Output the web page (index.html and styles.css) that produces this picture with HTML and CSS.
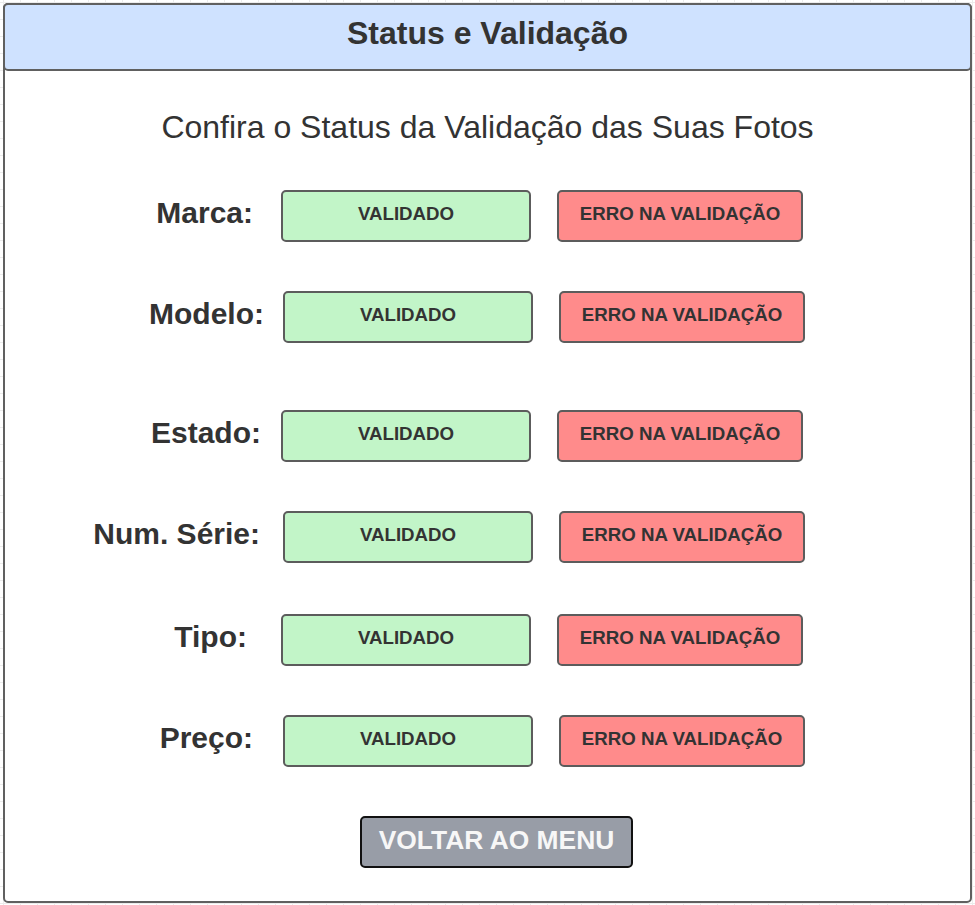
FILE: index.html
```html
<!DOCTYPE html>
<html lang="pt">
<head>
<meta charset="utf-8">
<title>Status e Validação</title>
<link rel="stylesheet" href="styles.css">
</head>
<body>
<div class="frame">
  <header class="header"><h1 class="title">Status e Validação</h1></header>
  <p class="subtitle">Confira o Status da Validação das Suas Fotos</p>
  <div class="rows">
    <div class="row r1"><div class="label l-marca">Marca:</div><div class="box ok">VALIDADO</div><div class="box err">ERRO NA VALIDAÇÃO</div></div>
    <div class="row r2 shift"><div class="label l-modelo">Modelo:</div><div class="box ok">VALIDADO</div><div class="box err">ERRO NA VALIDAÇÃO</div></div>
    <div class="row r3"><div class="label l-estado">Estado:</div><div class="box ok">VALIDADO</div><div class="box err">ERRO NA VALIDAÇÃO</div></div>
    <div class="row r4 shift"><div class="label l-serie">Num. Série:</div><div class="box ok">VALIDADO</div><div class="box err">ERRO NA VALIDAÇÃO</div></div>
    <div class="row r5"><div class="label l-tipo">Tipo:</div><div class="box ok">VALIDADO</div><div class="box err">ERRO NA VALIDAÇÃO</div></div>
    <div class="row r6 shift"><div class="label l-preco">Preço:</div><div class="box ok">VALIDADO</div><div class="box err">ERRO NA VALIDAÇÃO</div></div>
  </div>
  <div class="actions"><button class="back">VOLTAR AO MENU</button></div>
</div>
</body>
</html>
```

FILE: styles.css
```css
* { box-sizing: border-box; }
html, body { margin: 0; padding: 0; }
body {
  width: 975px;
  height: 905px;
  overflow: hidden;
  font-family: "Liberation Sans", Arial, sans-serif;
  color: #333333;
  background-color: #ffffff;
  background-image:
    linear-gradient(to right, #ececec 1px, transparent 1px),
    linear-gradient(to bottom, #ececec 1px, transparent 1px);
  background-size: 17px 17px;
  background-position: 3px 2px;
  padding: 3px;
}
.frame {
  width: 969px;
  height: 900px;
  background: #ffffff;
  border: 2px solid #606060;
  border-radius: 5px;
  display: flex;
  flex-direction: column;
}
.header {
  height: 68px;
  flex: none;
  margin: -2px -2px 0 -2px;
  background: #cfe2ff;
  border: 2px solid #606060;
  border-radius: 5px;
  display: flex;
  align-items: center;
  justify-content: center;
  padding-bottom: 8px;
}
.title {
  margin: 0;
  font-size: 32px;
  line-height: 38px;
  font-weight: 700;
  color: #333333;
}
.subtitle {
  margin: 37px 0 0 0;
  text-align: center;
  font-size: 32px;
  line-height: 38px;
  color: #333333;
}
.rows { display: flex; flex-direction: column; }
.row {
  display: flex;
  align-items: center;
  height: 51px;
  padding-left: 0;
}
.row.shift { padding-left: 2px; }
.r1 { margin-top: 44px; }
.r2 { margin-top: 50px; }
.r3 { margin-top: 68px; }
.r4 { margin-top: 50px; }
.r5 { margin-top: 52px; }
.r6 { margin-top: 50px; }
.label {
  width: 276px;
  text-align: right;
  font-size: 30px;
  font-weight: 700;
  margin-bottom: 6px;
  white-space: nowrap;
}
.l-marca { padding-right: 28px; }
.l-modelo { padding-right: 19px; }
.l-estado { padding-right: 20px; }
.l-serie { padding-right: 23px; }
.l-tipo { padding-right: 34px; }
.l-preco { padding-right: 30px; }
.box {
  height: 52px;
  border: 2px solid #5c5c5c;
  border-radius: 5px;
  display: flex;
  align-items: center;
  justify-content: center;
  font-size: 18.7px;
  font-weight: 700;
  color: #333333;
  padding-bottom: 4px;
}
.ok { width: 250px; background: #c2f5c8; }
.err { width: 246px; margin-left: 26px; background: #ff8b8b; }
.actions { margin-top: 50px; padding-left: 355px; }
.back {
  width: 273px;
  height: 52px;
  background: #989da7;
  border: 2px solid #111111;
  border-radius: 5px;
  font-family: "Liberation Sans", Arial, sans-serif;
  font-size: 26.4px;
  font-weight: 700;
  color: #f7f7f7;
  padding: 0 0 4px 0;
}
```
